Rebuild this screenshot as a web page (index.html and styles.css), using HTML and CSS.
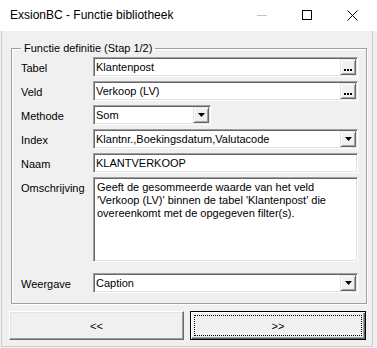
FILE: index.html
```html
<!DOCTYPE html>
<html lang="nl">
<head>
    <meta charset="UTF-8">
    <title>ExsionBC - Functie bibliotheek</title>
    <link rel="stylesheet" href="styles.css">
</head>
<body>
    <div class="window">
        <div class="titlebar">
            <span class="title">ExsionBC - Functie bibliotheek</span>
            <div class="controls">
                <span class="ctl">
                    <svg width="11" height="11" viewBox="0 0 11 11"><line x1="0" y1="5.5" x2="10" y2="5.5" stroke="#c4c4c4" stroke-width="1"/></svg>
                </span>
                <span class="ctl">
                    <svg width="11" height="11" viewBox="0 0 11 11"><rect x="0.5" y="0.5" width="9" height="9" fill="none" stroke="#000" stroke-width="1"/></svg>
                </span>
                <span class="ctl">
                    <svg width="11" height="11" viewBox="0 0 11 11"><path d="M0.5 0.5 L10.5 10.5 M10.5 0.5 L0.5 10.5" stroke="#000" stroke-width="1"/></svg>
                </span>
            </div>
        </div>
        <div class="client">
            <fieldset class="group">
                <legend>Functie definitie (Stap 1/2)</legend>
                <div class="form">
                    <label>Tabel</label>
                    <div class="edit">
                        <span class="value">Klantenpost</span>
                        <span class="mini-btn">
                            <svg width="8" height="2" viewBox="0 0 8 2"><rect x="0" y="0" width="2" height="2"/><rect x="3" y="0" width="2" height="2"/><rect x="6" y="0" width="2" height="2"/></svg>
                        </span>
                    </div>

                    <label>Veld</label>
                    <div class="edit">
                        <span class="value">Verkoop (LV)</span>
                        <span class="mini-btn">
                            <svg width="8" height="2" viewBox="0 0 8 2"><rect x="0" y="0" width="2" height="2"/><rect x="3" y="0" width="2" height="2"/><rect x="6" y="0" width="2" height="2"/></svg>
                        </span>
                    </div>

                    <label>Methode</label>
                    <div class="edit combo-small">
                        <span class="value">Som</span>
                        <span class="mini-btn drop">
                            <svg width="7" height="4" viewBox="0 0 7 4"><polygon points="0,0 7,0 3.5,4"/></svg>
                        </span>
                    </div>

                    <label>Index</label>
                    <div class="edit">
                        <span class="value">Klantnr.,Boekingsdatum,Valutacode</span>
                        <span class="mini-btn drop">
                            <svg width="7" height="4" viewBox="0 0 7 4"><polygon points="0,0 7,0 3.5,4"/></svg>
                        </span>
                    </div>

                    <label>Naam</label>
                    <div class="edit">
                        <span class="value">KLANTVERKOOP</span>
                    </div>

                    <label>Omschrijving</label>
                    <div class="edit memo">Geeft de gesommeerde waarde van het veld<br>'Verkoop (LV)' binnen de tabel 'Klantenpost' die<br>overeenkomt met de opgegeven filter(s).</div>

                    <label class="spaced">Weergave</label>
                    <div class="edit spaced">
                        <span class="value">Caption</span>
                        <span class="mini-btn drop">
                            <svg width="7" height="4" viewBox="0 0 7 4"><polygon points="0,0 7,0 3.5,4"/></svg>
                        </span>
                    </div>
                </div>
            </fieldset>
            <div class="actions">
                <button class="btn">&lt;&lt;</button>
                <button class="btn default">&gt;&gt;</button>
            </div>
        </div>
    </div>
</body>
</html>
```

FILE: styles.css
```css
* {
    box-sizing: border-box;
}
body {
    margin: 0;
    background: #f0f0f0;
    font-family: 'Liberation Sans', Arial, sans-serif;
    font-size: 11px;
    color: #000;
}
.window {
    width: 377px;
    height: 348px;
}
.titlebar {
    height: 31px;
    background: #fff;
    display: flex;
    align-items: center;
}
.title {
    padding-left: 10px;
    font-size: 12px;
    line-height: 31px;
}
.controls {
    margin-left: auto;
    display: flex;
    padding-right: 2px;
}
.ctl {
    width: 45px;
    height: 31px;
    display: flex;
    align-items: center;
    justify-content: center;
}
.ctl svg {
    display: block;
}
.client {
    margin-left: 1px;
    width: 372px;
    height: 316px;
    padding: 9px 0 0 7px;
    border: 1px solid #cdcdcd;
    border-top: 0;
    background: #f0f0f0;
}
.group {
    width: 356px;
    margin: 0 0 0 2px;
    padding: 1px 8px 10px 9px;
    border: 1px solid #a0a0a0;
    box-shadow: inset 1px 1px 0 #fff, 1px 1px 0 #fff;
}
.group legend {
    padding: 0 3px;
    line-height: 16px;
}
.form {
    display: grid;
    grid-template-columns: 72px 265px;
    row-gap: 4px;
}
.form label {
    padding-top: 5px;
    line-height: 13px;
}
.edit {
    height: 20px;
    display: flex;
    align-items: center;
    padding: 1px;
    background: #fff;
    border: 1px solid;
    border-color: #a0a0a0 #fff #fff #a0a0a0;
    box-shadow: inset 1px 1px 0 #696969, inset -1px -1px 0 #e3e3e3;
}
.edit .value {
    flex: 1;
    padding-left: 1px;
    line-height: 16px;
    white-space: nowrap;
    overflow: hidden;
}
.combo-small {
    width: 118px;
}
.mini-btn {
    width: 16px;
    height: 16px;
    flex: none;
    display: flex;
    justify-content: center;
    align-items: flex-end;
    padding-bottom: 3px;
    background: #f0f0f0;
    border: 1px solid;
    border-color: #e3e3e3 #696969 #696969 #e3e3e3;
    box-shadow: inset 1px 1px 0 #fff, inset -1px -1px 0 #a0a0a0;
}
.mini-btn svg {
    display: block;
}
.mini-btn.drop {
    align-items: center;
    padding-bottom: 0;
}
.memo {
    height: 85px;
    display: block;
    padding: 3px 3px 0 3px;
    line-height: 13px;
}
.form .spaced {
    margin-top: 7px;
}
.actions {
    display: grid;
    grid-template-columns: 175px 176px;
    column-gap: 6px;
    margin-top: 7px;
}
.btn {
    position: relative;
    height: 29px;
    padding: 0;
    font-family: inherit;
    font-size: 11px;
    color: #000;
    background: #f0f0f0;
    border: 1px solid;
    border-color: #fff #696969 #696969 #fff;
    box-shadow: inset -1px -1px 0 #a0a0a0, inset 1px 1px 0 #e3e3e3;
}
.btn.default {
    border: 1px solid #000;
    box-shadow: inset 1px 1px 0 #fff, inset -1px -1px 0 #696969, inset -2px -2px 0 #a0a0a0;
}
.btn.default::after {
    content: '';
    position: absolute;
    top: 3px;
    left: 3px;
    right: 3px;
    bottom: 3px;
    border: 1px dotted #000;
}
```
